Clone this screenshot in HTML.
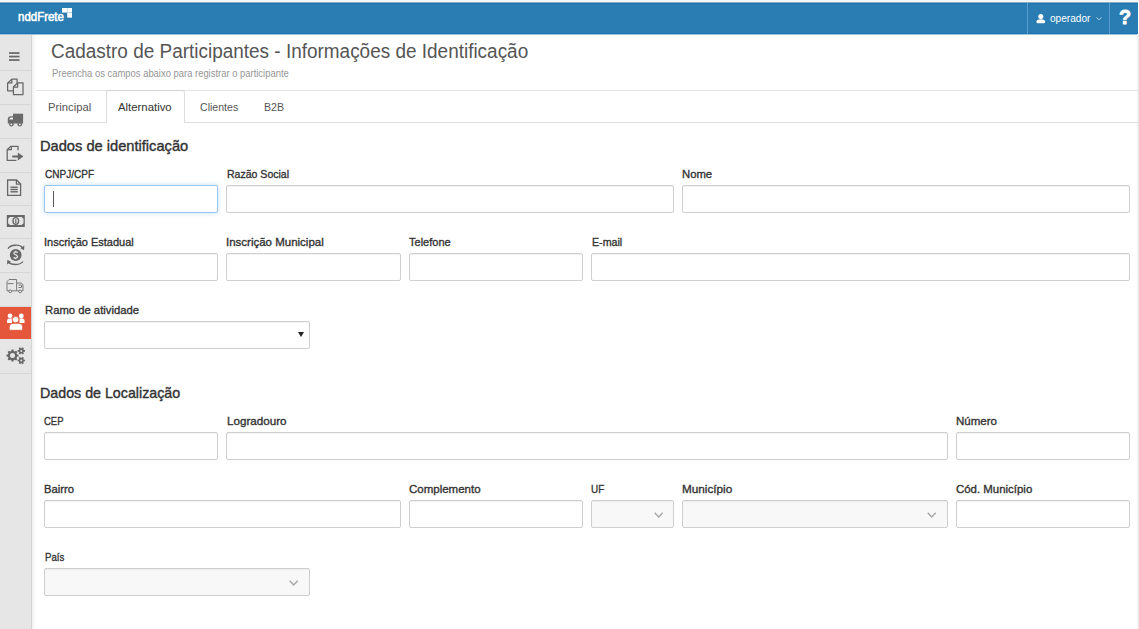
<!DOCTYPE html>
<html><head><meta charset="utf-8">
<style>
*{box-sizing:border-box;margin:0;padding:0}
html,body{width:1139px;height:629px;overflow:hidden;background:#fff;font-family:"Liberation Sans",sans-serif;}
div,svg{position:absolute}
.t{white-space:nowrap;transform-origin:0 0}
#top{left:0;top:0;width:1139px;height:2px;background:#f3f5f7}
#hdr{left:0;top:2px;width:1138px;height:33px;background:#297db3;border-top:1px solid #8eabc0;border-bottom:1px solid #a6c4da;box-shadow:inset 0 1px 0 #1b74b1,inset 0 -1px 0 #1b74b1}
.hsep{top:0;width:1px;height:31px;background:#5a9ccb}
#side{left:0;top:35px;width:32px;height:594px;background:#e6e6e6;border-right:1px solid #d4d4d4}
#shadow{left:32px;top:35px;width:4px;height:594px;background:linear-gradient(to right,#efefef,#fff)}
.sd{left:0;width:31px;height:1px;background:#d6d6d6}
#rline{left:1137px;top:34px;width:2px;height:595px;background:linear-gradient(to right,#f6f6f6,#e6e6e6)}
#tabline1{left:36px;top:90px;width:1102px;height:1px;background:#e4e4e4}
#tabline2{left:36px;top:122px;width:1102px;height:1px;background:#dddddd}
#acttab{left:106px;top:90px;width:79px;height:33px;background:#fff;border:1px solid #ddd;border-top-color:#d3d3d3;border-bottom:none;border-radius:3px 3px 0 0}
.inp{height:28px;border:1px solid #cfcfcf;border-radius:2px;background:#fff;box-shadow:inset 0 1px 1px rgba(0,0,0,.05)}
.foc{border-color:#98c6ee;box-shadow:0 0 5px rgba(102,175,233,.4)}
.dis{background:#f8f8f8}
.caret{left:8px;top:5px;width:1px;height:16px;background:#555}
.tri{right:4.5px;top:10px}
.chev{right:9.5px;top:10.6px}
</style></head><body>
<div id="top"></div>
<div id="hdr">
  <svg style="left:62px;top:5px" width="11" height="10" viewBox="0 0 11 10">
    <rect x="0" y="0" width="5" height="4.6" fill="#fff"/><rect x="5.2" y="0" width="4.8" height="4.6" fill="#fff"/><rect x="5.2" y="4.8" width="4.8" height="4.8" fill="#fff"/>
  </svg>
  <div class="hsep" style="left:1027px"></div>
  <svg style="left:1036px;top:11px" width="10" height="10" viewBox="0 0 10 10">
    <circle cx="4.8" cy="2.6" r="2.5" fill="#fff"/><path d="M0.4 7.8 C0.4 6 1.6 5.2 4.8 5.2 C8 5.2 9.2 6 9.2 7.8 Q9.2 9.2 8 9.2 H1.6 Q0.4 9.2 0.4 7.8Z" fill="#fff"/>
  </svg>
  <svg style="left:1095.5px;top:14px" width="6" height="4" viewBox="0 0 6 4"><path d="M0.4 0.4L3 2.8L5.6 0.4" fill="none" stroke="#bcd6ea" stroke-width="0.9"/></svg>
  <div class="hsep" style="left:1109px"></div>
</div>
<div id="side">
  <div class="sd" style="top:35px"></div>
  <div class="sd" style="top:69px"></div>
  <div class="sd" style="top:103px"></div>
  <div class="sd" style="top:137px"></div>
  <div class="sd" style="top:170px"></div>
  <div class="sd" style="top:203px"></div>
  <div class="sd" style="top:237px"></div>
  <div class="sd" style="top:271px"></div>
  <div style="left:0;top:272px;width:31px;height:32px;background:#e5573b"></div>
  <div class="sd" style="top:338px"></div>
</div>
<div id="shadow"></div>
<!-- sidebar icons (absolute page coords) -->
<svg style="left:0;top:34px" width="31" height="340" viewBox="0 34 31 340">
  <g fill="#676767">
    <rect x="9" y="52.2" width="10.5" height="1.7"/><rect x="9" y="55.7" width="10.5" height="1.7"/><rect x="9" y="59.2" width="10.5" height="1.7"/>
  </g>
  <!-- copy -->
  <g fill="none" stroke="#676767" stroke-width="1.25" stroke-linejoin="round">
    <path d="M13 90.8H7.6V83.3L11.8 79.1H17.1V83"/>
    <path d="M11.8 79.3V82.9H7.8"/>
    <path d="M17.6 82.8H23V94.5H13.4V87L17.6 82.8Z"/>
    <path d="M17.6 83V87H13.6"/>
  </g>
  <!-- solid truck -->
  <g fill="#6a6a6a">
    <rect x="13" y="113.7" width="10.1" height="9.8"/>
    <path d="M7.8 123.5V119.5Q7.8 116.2 11.2 116.2H13.5V123.5Z"/>
    <circle cx="11.4" cy="124.3" r="2.3"/><circle cx="19.8" cy="124.3" r="2.3"/>
  </g>
  <g fill="#f0f0f0"><circle cx="11.4" cy="124.4" r="0.9"/><circle cx="19.8" cy="124.4" r="0.9"/><path d="M9.2 119.6Q9.5 117.6 11.4 117.6H13V119.6Z"/></g>
  <!-- export -->
  <g fill="none" stroke="#676767" stroke-width="1.3" stroke-linejoin="round">
    <path d="M18 150.2V146.4H10.6L7.2 149.8V160.3H16.4"/>
    <path d="M11.3 146.6V149.7H7.4"/>
  </g>
  <path d="M12.2 155.6H17.8V152.4L23.4 156.5L17.8 160.6V157.4H12.2Z" fill="#676767"/>
  <!-- document -->
  <g fill="none" stroke="#676767" stroke-width="1.3" stroke-linejoin="round">
    <path d="M7.6 180H16.6L20.6 184V195.4H7.6Z"/>
    <path d="M16.4 180.2V184.1H20.4"/>
  </g>
  <g fill="#676767"><rect x="10.4" y="186.5" width="7.4" height="1.4"/><rect x="10.4" y="188.8" width="7.4" height="1.4"/><rect x="10.4" y="191.1" width="7.4" height="1.4"/></g>
  <!-- money -->
  <path d="M6.8 215H24.8V227H6.8Z M10 216.9H21.6L23.5 218.8V223.2L21.6 225.1H10L8.1 223.2V218.8Z" fill="#676767" fill-rule="evenodd"/>
  <ellipse cx="15.8" cy="221" rx="2.8" ry="3.4" fill="none" stroke="#676767" stroke-width="1.4"/>
  <path d="M15.2 219.2H16.4V223.2H15.2Z" fill="#676767"/>
  <!-- dollar exchange -->
  <circle cx="15.7" cy="255" r="5.9" fill="#676767"/>
  <path d="M17.6 252.6C17 251.7 14 251.4 13.9 253.1C13.8 254.8 17.6 254.6 17.6 256.6C17.6 258.5 14.3 258.4 13.6 257.4M15.7 250.8V252M15.7 258.1V259.3" fill="none" stroke="#ececec" stroke-width="1.2"/>
  <g fill="none" stroke="#676767" stroke-width="1.3">
    <path d="M8 248.6C10.5 244.6 19.5 244 22.6 247.6"/>
    <path d="M23 261.5C20.5 265.2 11.5 265.6 8.4 262"/>
  </g>
  <path d="M24.4 245.6L24 250.3L20.4 248.2Z" fill="#676767"/>
  <path d="M7 264.4L7.4 259.7L11 261.8Z" fill="#676767"/>
  <!-- outline truck -->
  <g fill="none" stroke="#7a7a7a" stroke-width="1" stroke-linejoin="round">
    <path d="M9 279.5H16.6V290.8H7V281.5Z"/>
    <path d="M7.5 283.6H13.6"/>
    <path d="M16.6 283H21.4L23 284.8V290.8H16.6"/>
    <path d="M18.5 285H21.5V287.5H18.5"/>
    <circle cx="10.2" cy="291.3" r="1.4" fill="#e6e6e6"/><circle cx="20.1" cy="291.4" r="1.4" fill="#e6e6e6"/>
  </g>
  <!-- gears -->
  <path d="M17.06 354.47 L18.52 354.60 L18.52 356.60 L17.06 356.73 L16.53 358.02 L17.46 359.15 L16.05 360.56 L14.92 359.63 L13.63 360.16 L13.50 361.62 L11.50 361.62 L11.37 360.16 L10.08 359.63 L8.95 360.56 L7.54 359.15 L8.47 358.02 L7.94 356.73 L6.48 356.60 L6.48 354.60 L7.94 354.47 L8.47 353.18 L7.54 352.05 L8.95 350.64 L10.08 351.57 L11.37 351.04 L11.50 349.58 L13.50 349.58 L13.63 351.04 L14.92 351.57 L16.05 350.64 L17.46 352.05 L16.53 353.18Z M15.00 355.60 A2.5 2.5 0 1 0 10.00 355.60 A2.5 2.5 0 1 0 15.00 355.60Z M23.86 350.04 L25.01 350.07 L25.01 351.73 L23.86 351.76 L23.33 352.69 L23.87 353.70 L22.44 354.53 L21.83 353.55 L20.77 353.55 L20.16 354.53 L18.73 353.70 L19.27 352.69 L18.74 351.76 L17.59 351.73 L17.59 350.07 L18.74 350.04 L19.27 349.11 L18.73 348.10 L20.16 347.27 L20.77 348.25 L21.83 348.25 L22.44 347.27 L23.87 348.10 L23.33 349.11Z M22.30 350.90 A1.0 1.0 0 1 0 20.30 350.90 A1.0 1.0 0 1 0 22.30 350.90Z M23.86 359.64 L25.01 359.67 L25.01 361.33 L23.86 361.36 L23.33 362.29 L23.87 363.30 L22.44 364.13 L21.83 363.15 L20.77 363.15 L20.16 364.13 L18.73 363.30 L19.27 362.29 L18.74 361.36 L17.59 361.33 L17.59 359.67 L18.74 359.64 L19.27 358.71 L18.73 357.70 L20.16 356.87 L20.77 357.85 L21.83 357.85 L22.44 356.87 L23.87 357.70 L23.33 358.71Z M22.30 360.50 A1.0 1.0 0 1 0 20.30 360.50 A1.0 1.0 0 1 0 22.30 360.50Z" fill="#676767" fill-rule="evenodd"/>
</svg>
<!-- team icon on red -->
<svg style="left:0;top:307px" width="31" height="32" viewBox="0 307 31 32">
  <g fill="#fff">
    <circle cx="10" cy="315.8" r="2.4"/><circle cx="21.3" cy="316" r="2.4"/>
    <path d="M7 322.9V320.6Q7 318.5 9.2 318.5H12V322.9Z"/>
    <path d="M24.5 322.9V320.6Q24.5 318.5 22.3 318.5H19.5V322.9Z"/>
    <circle cx="15.6" cy="319.6" r="3.3" stroke="#e5573b" stroke-width="0.9"/>
    <path d="M9.2 330.3V327.2Q9.2 323.3 13 323.3H18.9Q22.7 323.3 22.7 327.2V330.3Z" stroke="#e5573b" stroke-width="0.9"/>
  </g>
</svg>
<div id="rline"></div>
<div id="tabline1"></div>
<div id="tabline2"></div>
<div id="acttab"></div>
<div class="inp foc" style="left:44.00px;top:185px;width:174.33px"><div class="caret"></div></div>
<div class="inp" style="left:226.33px;top:185px;width:447.83px"></div>
<div class="inp" style="left:682.17px;top:185px;width:447.83px"></div>
<div class="inp" style="left:44.00px;top:253px;width:174.33px"></div>
<div class="inp" style="left:226.33px;top:253px;width:174.33px"></div>
<div class="inp" style="left:408.67px;top:253px;width:174.33px"></div>
<div class="inp" style="left:591.00px;top:253px;width:539.00px"></div>
<div class="inp sel" style="left:44.00px;top:321px;width:265.50px"><svg class="tri" width="6" height="5" viewBox="0 0 6 5"><path d="M0 0H6L3 5Z" fill="#222"/></svg></div>
<div class="inp" style="left:44.00px;top:432px;width:174.33px"></div>
<div class="inp" style="left:226.33px;top:432px;width:721.33px"></div>
<div class="inp" style="left:955.67px;top:432px;width:174.33px"></div>
<div class="inp" style="left:44.00px;top:500px;width:356.67px"></div>
<div class="inp" style="left:408.67px;top:500px;width:174.33px"></div>
<div class="inp dis" style="left:591.00px;top:500px;width:83.17px"><svg class="chev" width="10" height="7" viewBox="0 0 10 7"><path d="M0.7 0.7L4.7 4.9L8.7 0.7" fill="none" stroke="#a6a6a6" stroke-width="1.4"/></svg></div>
<div class="inp dis" style="left:682.17px;top:500px;width:265.50px"><svg class="chev" width="10" height="7" viewBox="0 0 10 7"><path d="M0.7 0.7L4.7 4.9L8.7 0.7" fill="none" stroke="#a6a6a6" stroke-width="1.4"/></svg></div>
<div class="inp" style="left:955.67px;top:500px;width:174.33px"></div>
<div class="inp dis" style="left:44.00px;top:568px;width:265.50px"><svg class="chev" width="10" height="7" viewBox="0 0 10 7"><path d="M0.7 0.7L4.7 4.9L8.7 0.7" fill="none" stroke="#a6a6a6" stroke-width="1.4"/></svg></div>
<div id="l0" class="t" style="left:44.52px;top:166.98px;font-size:11.6px;line-height:14px;color:#333;-webkit-text-stroke:0.35px #333;transform:scaleX(0.8658)">CNPJ/CPF</div>
<div id="l1" class="t" style="left:226.62px;top:166.98px;font-size:11.6px;line-height:14px;color:#333;-webkit-text-stroke:0.35px #333;transform:scaleX(0.9084)">Razão Social</div>
<div id="l2" class="t" style="left:682.48px;top:166.98px;font-size:11.6px;line-height:14px;color:#333;-webkit-text-stroke:0.35px #333;transform:scaleX(0.9749)">Nome</div>
<div id="l3" class="t" style="left:43.68px;top:234.98px;font-size:11.6px;line-height:14px;color:#333;-webkit-text-stroke:0.35px #333;transform:scaleX(0.9471)">Inscrição Estadual</div>
<div id="l4" class="t" style="left:225.68px;top:234.98px;font-size:11.6px;line-height:14px;color:#333;-webkit-text-stroke:0.35px #333;transform:scaleX(0.9916)">Inscrição Municipal</div>
<div id="l5" class="t" style="left:409.10px;top:234.98px;font-size:11.6px;line-height:14px;color:#333;-webkit-text-stroke:0.35px #333;transform:scaleX(0.9513)">Telefone</div>
<div id="l6" class="t" style="left:591.62px;top:234.98px;font-size:11.6px;line-height:14px;color:#333;-webkit-text-stroke:0.35px #333;transform:scaleX(0.9198)">E-mail</div>
<div id="l7" class="t" style="left:44.62px;top:302.98px;font-size:11.6px;line-height:14px;color:#333;-webkit-text-stroke:0.35px #333;transform:scaleX(0.9722)">Ramo de atividade</div>
<div id="l8" class="t" style="left:43.52px;top:413.98px;font-size:11.6px;line-height:14px;color:#333;-webkit-text-stroke:0.35px #333;transform:scaleX(0.8159)">CEP</div>
<div id="l9" class="t" style="left:226.62px;top:413.98px;font-size:11.6px;line-height:14px;color:#333;-webkit-text-stroke:0.35px #333;transform:scaleX(1.0033)">Logradouro</div>
<div id="l10" class="t" style="left:955.86px;top:413.98px;font-size:11.6px;line-height:14px;color:#333;-webkit-text-stroke:0.35px #333;transform:scaleX(0.9944)">Número</div>
<div id="l11" class="t" style="left:44.10px;top:481.98px;font-size:11.6px;line-height:14px;color:#333;-webkit-text-stroke:0.35px #333;transform:scaleX(0.9698)">Bairro</div>
<div id="l12" class="t" style="left:409.00px;top:481.98px;font-size:11.6px;line-height:14px;color:#333;-webkit-text-stroke:0.35px #333;transform:scaleX(0.9910)">Complemento</div>
<div id="l13" class="t" style="left:591.00px;top:481.98px;font-size:11.6px;line-height:14px;color:#333;-webkit-text-stroke:0.35px #333;transform:scaleX(0.8531)">UF</div>
<div id="l14" class="t" style="left:682.00px;top:481.98px;font-size:11.6px;line-height:14px;color:#333;-webkit-text-stroke:0.35px #333;transform:scaleX(1.0129)">Município</div>
<div id="l15" class="t" style="left:955.86px;top:481.98px;font-size:11.6px;line-height:14px;color:#333;-webkit-text-stroke:0.35px #333;transform:scaleX(0.9863)">Cód. Município</div>
<div id="l16" class="t" style="left:44.76px;top:549.98px;font-size:11.6px;line-height:14px;color:#333;-webkit-text-stroke:0.35px #333;transform:scaleX(0.8329)">País</div>
<div id="logo" class="t" style="left:17.62px;top:9.16px;font-size:12.8px;line-height:16px;color:#fff;-webkit-text-stroke:0.55px #fff;transform:scaleX(0.8963)">nddFrete</div>
<div id="user" class="t" style="left:1050.38px;top:10.76px;font-size:10.5px;line-height:14px;color:#fff;transform:scaleX(0.9626)">operador</div>
<div id="help" class="t" style="left:1119.38px;top:5.72px;font-size:21px;line-height:22px;color:#fff;font-weight:bold;-webkit-text-stroke:0.8px #fff;transform:scaleX(0.9458)">?</div>
<div id="title" class="t" style="left:51.30px;top:40.41px;font-size:19.6px;line-height:22px;color:#555;transform:scaleX(0.9672)">Cadastro de Participantes - Informações de Identificação</div>
<div id="sub" class="t" style="left:52.10px;top:67.36px;font-size:10.5px;line-height:12px;color:#959595;transform:scaleX(0.8974)">Preencha os campos abaixo para registrar o participante</div>
<div id="tab0" class="t" style="left:47.92px;top:100.19px;font-size:11px;line-height:14px;color:#555;transform:scaleX(1.0230)">Principal</div>
<div id="tab1" class="t" style="left:118.10px;top:100.19px;font-size:11px;line-height:14px;color:#333;transform:scaleX(1.0329)">Alternativo</div>
<div id="tab2" class="t" style="left:199.62px;top:100.19px;font-size:11px;line-height:14px;color:#555;transform:scaleX(0.9602)">Clientes</div>
<div id="tab3" class="t" style="left:264.44px;top:100.19px;font-size:11px;line-height:14px;color:#555;transform:scaleX(0.9661)">B2B</div>
<div id="sec0" class="t" style="left:39.92px;top:136.80px;font-size:15px;line-height:17px;color:#333;-webkit-text-stroke:0.4px #333;transform:scaleX(0.9764)">Dados de identificação</div>
<div id="sec1" class="t" style="left:39.54px;top:383.80px;font-size:15px;line-height:17px;color:#333;-webkit-text-stroke:0.4px #333;transform:scaleX(0.9497)">Dados de Localização</div>
</body></html>
